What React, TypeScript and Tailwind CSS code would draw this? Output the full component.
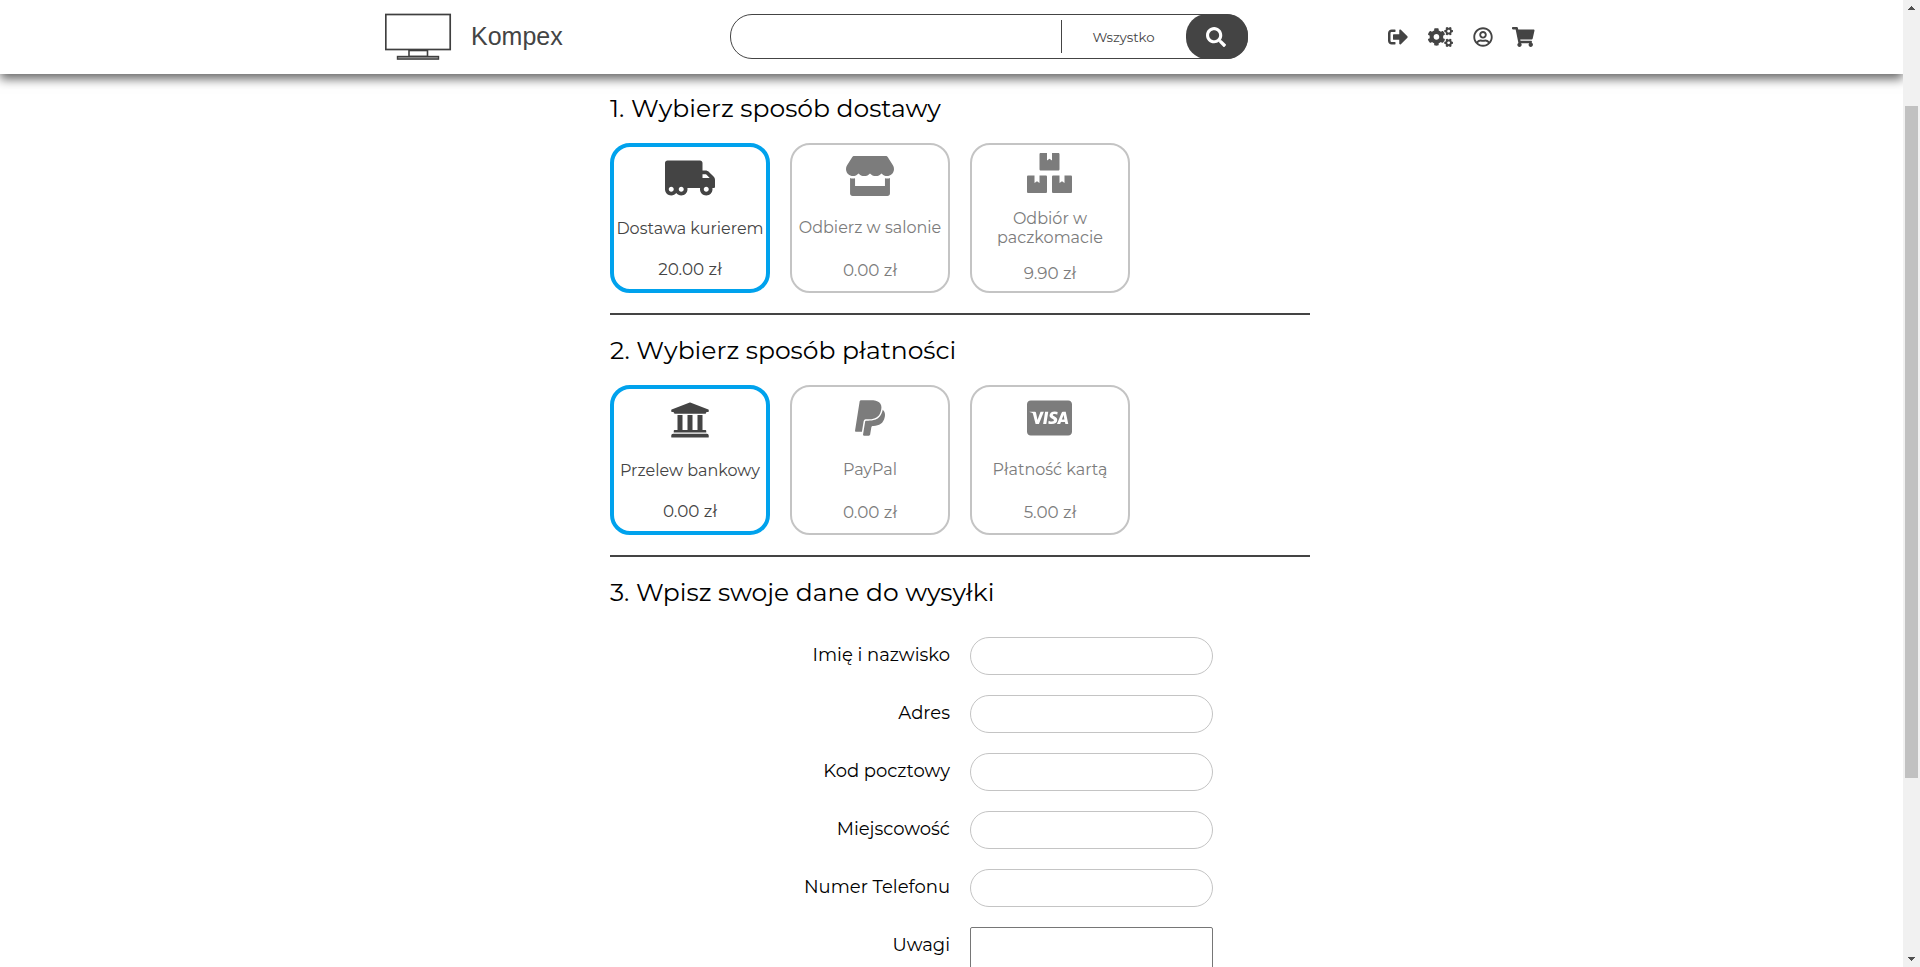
import type { IconType } from "react-icons";
import {
  FaBoxes,
  FaCcVisa,
  FaCogs,
  FaPaypal,
  FaRegUserCircle,
  FaSearch,
  FaShoppingCart,
  FaSignOutAlt,
  FaStore,
  FaTruckMoving,
  FaUniversity,
} from "react-icons/fa";

type Option = {
  icon: IconType;
  iconWidth: string;
  label: string;
  price: string;
  active?: boolean;
};

const delivery: Option[] = [
  { icon: FaTruckMoving, iconWidth: "w-[50px]", label: "Dostawa kurierem", price: "20.00 zł", active: true },
  { icon: FaStore, iconWidth: "w-[48px]", label: "Odbierz w salonie", price: "0.00 zł" },
  { icon: FaBoxes, iconWidth: "mr-px w-[45px]", label: "Odbiór w paczkomacie", price: "9.90 zł" },
];

const payment: Option[] = [
  { icon: FaUniversity, iconWidth: "w-[40px]", label: "Przelew bankowy", price: "0.00 zł", active: true },
  { icon: FaPaypal, iconWidth: "w-[30px]", label: "PayPal", price: "0.00 zł" },
  { icon: FaCcVisa, iconWidth: "mr-px w-[45px]", label: "Płatność kartą", price: "5.00 zł" },
];

const fields = ["Imię i nazwisko", "Adres", "Kod pocztowy", "Miejscowość", "Numer Telefonu"];

function Logo() {
  return (
    <svg className="shrink-0" width="67" height="50" viewBox="0 0 67 50" fill="none" stroke="#3f3f3f">
      <rect x="0.8" y="1.5" width="64.4" height="35" strokeWidth="1.7" />
      <rect x="24" y="37.5" width="18.5" height="6" strokeWidth="1.6" />
      <rect x="12.5" y="43.5" width="41" height="2.6" strokeWidth="1.4" fill="#999" />
    </svg>
  );
}

function Header() {
  return (
    <header className="relative z-10 flex h-[74px] shrink-0 items-start bg-white text-[#444] shadow-[0_5px_10px_rgba(0,0,0,0.6)]">
      <div className="ml-[385px] flex w-[345px] shrink-0 pt-[13px]">
        <Logo />
        <span className="ml-[19px] mt-2 font-['Liberation_Sans',sans-serif] text-[25px] leading-[30px]">Kompex</span>
      </div>
      <div className="mt-[14px] flex h-[45px] w-[518px] shrink-0 items-stretch rounded-[22px] border border-[#444]">
        <div className="my-[5px] w-[331px] border-r border-[#444]" />
        <div className="flex flex-1 items-center justify-center pr-0.5 pt-0.5 text-[13.33px]">Wszystko</div>
        <button className="-m-px flex w-[62px] items-center justify-center rounded-[21px] bg-[#444] pr-0.5 text-white">
          <FaSearch size={20} />
        </button>
      </div>
      <nav className="ml-[140px] mt-[26.5px] flex gap-5">
        <FaSignOutAlt className="h-5 w-5" />
        <FaCogs className="h-5 w-[25px]" />
        <FaRegUserCircle className="h-5 w-5" />
        <FaShoppingCart className="-ml-px h-5 w-[22.5px]" />
      </nav>
    </header>
  );
}

function Card({ icon: Icon, iconWidth, label, price, active }: Option) {
  return (
    <div
      className={
        "flex h-[150px] w-40 flex-col items-center justify-around rounded-[20px] text-center text-[16px] leading-[19.5px] " +
        (active ? "border-4 border-[#00a2ed] text-[#444]" : "border-2 border-[#c4c4c4] text-[#7c7c7c]")
      }
    >
      <Icon className={"h-10 shrink-0 " + iconWidth} />
      <span>{label}</span>
      <span className="-mb-[0.5px] mt-[0.5px] text-[16.8px] leading-[19.5px]">{price}</span>
    </div>
  );
}

function Section({ title, options }: { title: string; options: Option[] }) {
  return (
    <section className="h-[242px]">
      <h2 className="h-[50px] text-[25px] leading-[30px]">{title}</h2>
      <div className="flex gap-5">
        {options.map((o) => (
          <Card key={o.label} {...o} />
        ))}
      </div>
      <hr className="mt-5 border-t-2 border-[#444]" />
    </section>
  );
}

function Scrollbar() {
  return (
    <div className="flex w-[17px] shrink-0 flex-col items-center justify-between bg-[#f1f1f1]">
      <svg width="17" height="17" fill="#505050" shapeRendering="crispEdges">
        <path d="M5 10h7v-1h-1v-1h-1v-1h-1v-1h-1v1h-1v1h-1v1h-1z" />
      </svg>
      <div className="mb-[172px] mt-[89px] w-[13px] flex-1 bg-[#c1c1c1]" />
      <svg width="17" height="17" fill="#505050" shapeRendering="crispEdges">
        <path d="M5 7h7v1h-1v1h-1v1h-1v1h-1v-1h-1v-1h-1v-1h-1z" />
      </svg>
    </div>
  );
}

export default function App() {
  return (
    <div className="flex h-[967px] overflow-hidden bg-white font-['Montserrat',Inter,sans-serif] font-normal">
      <div className="flex min-w-0 flex-1 flex-col overflow-hidden">
        <Header />
        <main className="ml-[610px] w-[700px] pt-[19px] text-black">
          <Section title="1. Wybierz sposób dostawy" options={delivery} />
          <Section title="2. Wybierz sposób płatności" options={payment} />
          <h2 className="h-[60px] text-[25px] leading-[30px]">3. Wpisz swoje dane do wysyłki</h2>
          <form className="flex flex-col gap-5 text-[18px]">
            {fields.map((label) => (
              <label key={label} className="flex h-[38px] gap-5">
                <span className="w-[340px] pt-[7px] text-right leading-[22px]">{label}</span>
                <input className="w-[243px] rounded-[19px] border border-[#c4c4c4]" />
              </label>
            ))}
            <label className="flex gap-5">
              <span className="w-[340px] pt-[7px] text-right leading-[22px]">Uwagi</span>
              <textarea className="h-[100px] w-[243px] resize-none rounded-[2px] border border-[#767676]" />
            </label>
          </form>
        </main>
      </div>
      <Scrollbar />
    </div>
  );
}
